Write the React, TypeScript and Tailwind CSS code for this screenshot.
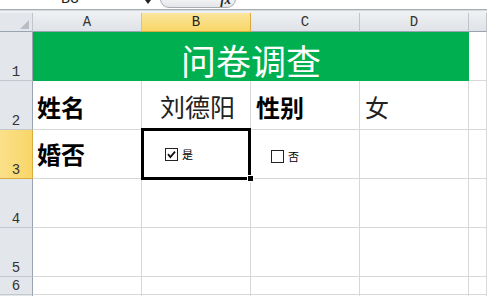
const cjk = "font-['Noto_Sans_CJK_SC',sans-serif]";
const mono = "font-['Liberation_Mono','Noto_Sans_CJK_SC',monospace]";
const cell = "border-r border-b border-[#d8d8d8]";
const rowHead =
  "flex items-end justify-center border-r border-b border-r-[#9aa4b0] border-b-[#c3c8cf] bg-[#e3e6ea] pb-[1px] text-[14px] leading-none text-[#333]";
const colHead =
  "flex items-center justify-center border-r border-b border-r-[#c0c5cc] border-b-[#9aa4b0] bg-gradient-to-b from-[#eef0f2] to-[#dfe2e7] text-[14px] text-[#333]";

const CheckBox = ({ checked }: { checked: boolean }) => (
  <svg width="13" height="13" viewBox="0 0 13 13" className="shrink-0">
    <rect x="0.5" y="0.5" width="12" height="12" fill="#fff" stroke="#222" />
    {checked && (
      <path d="M3 6.2 L5.4 9 L10 3.6" fill="none" stroke="#111" strokeWidth="1.8" />
    )}
  </svg>
);

const FormulaStrip = () => (
  <div className="h-[13px] shrink-0 bg-white">
    <div className="flex h-[9px] items-start overflow-hidden">
      <div className={`ml-[61px] -mt-[8px] w-[80px] text-[15px] leading-none text-[#222] ${mono}`}>B3</div>
      <div className="ml-[4px] h-0 w-0 border-x-[3px] border-t-[4px] border-x-transparent border-t-[#222]" />
      <div className="ml-[9px] -mt-[10px] flex h-[18px] w-[76px] items-end justify-end rounded-b-[9px] border border-[#a9adb3] bg-gradient-to-b from-white to-[#e4e6e9] pr-[4px] pb-[1px]">
        <span className="font-['Liberation_Serif',serif] text-[13px] leading-none font-bold italic text-[#222]">fx</span>
      </div>
    </div>
    <div className="h-px bg-[#a7adb5]" />
    <div className="h-px bg-[#d6d9dd]" />
    <div className="h-[2px] bg-[#eef0f2]" />
  </div>
);

export default function App() {
  return (
    <div className={`relative h-[296px] w-[487px] overflow-hidden bg-white ${cjk}`}>
      <FormulaStrip />
      <div className="grid grid-cols-[33px_109px_109px_109px_109px_1fr] grid-rows-[19px_49px_49px_49px_49px_49px_18px_1fr]">
        {/* header row */}
        <div className="flex items-end justify-end border-r border-b border-r-[#c0c5cc] border-b-[#9aa4b0] bg-[#e3e6ea] pr-[3px] pb-[2px]">
          <svg width="9" height="9" viewBox="0 0 9 9">
            <path d="M9 0 L9 9 L0 9 Z" fill="#b9bec6" />
          </svg>
        </div>
        <div className={`${colHead} ${mono}`}>A</div>
        <div className={`flex items-center justify-center border-r border-b border-r-[#d9aa3c] border-b-[#d9aa3c] bg-gradient-to-b from-[#fbe59c] to-[#f8d666] text-[14px] text-[#222] ${mono}`}>
          B
        </div>
        <div className={`${colHead} ${mono}`}>C</div>
        <div className={`${colHead} ${mono}`}>D</div>
        <div className={`${colHead} ${mono}`} />

        {/* row 1 */}
        <div className={`${rowHead} ${mono}`}>1</div>
        <div className="col-span-4 flex items-center justify-center bg-[#00b050] pt-[5px] text-[35px] leading-none text-white">
          问卷调查
        </div>
        <div className={cell} />

        {/* row 2 */}
        <div className={`${rowHead} ${mono}`}>2</div>
        <div className={`${cell} flex items-center pt-[3px] pl-[4px] text-[24px] leading-none font-bold text-black`}>姓名</div>
        <div className={`${cell} flex items-center pt-[3px] pl-[18px] text-[25px] leading-none text-[#222]`}>刘德阳</div>
        <div className={`${cell} flex items-center pt-[3px] pl-[5px] text-[24px] leading-none font-bold text-black`}>性别</div>
        <div className={`${cell} flex items-center pt-[4px] pl-[5px] text-[24px] leading-none text-[#222]`}>女</div>
        <div className={cell} />

        {/* row 3 */}
        <div className={`${rowHead} ${mono} border-r-[#d9aa3c] border-b-[#d9aa3c] bg-gradient-to-r from-[#fbe08a] to-[#f8d666]`}>3</div>
        <div className={`${cell} flex items-center pl-[4px] text-[24px] leading-none font-bold text-black`}>婚否</div>
        <div className={`${cell} flex items-center gap-[4px] pt-[1px] pl-[23px]`}>
          <CheckBox checked />
          <span className="text-[11px] leading-none text-black">是</span>
        </div>
        <div className={`${cell} flex items-center gap-[4px] pt-[4px] pl-[20px]`}>
          <CheckBox checked={false} />
          <span className="text-[11px] leading-none text-black">否</span>
        </div>
        <div className={cell} />
        <div className={cell} />

        {/* rows 4-7 */}
        {["4", "5", "6", ""].map((n, i) => (
          <div key={i} className="contents">
            <div className={`${rowHead} ${mono}`}>{n}</div>
            <div className={cell} />
            <div className={cell} />
            <div className={cell} />
            <div className={cell} />
            <div className={cell} />
          </div>
        ))}
      </div>

      {/* active cell B3 */}
      <div className="absolute top-[128px] left-[141px] h-[52px] w-[110px] border-[3px] border-black" />
      <div className="absolute top-[175px] left-[247px] h-[7px] w-[7px] border border-white bg-black" />
    </div>
  );
}
